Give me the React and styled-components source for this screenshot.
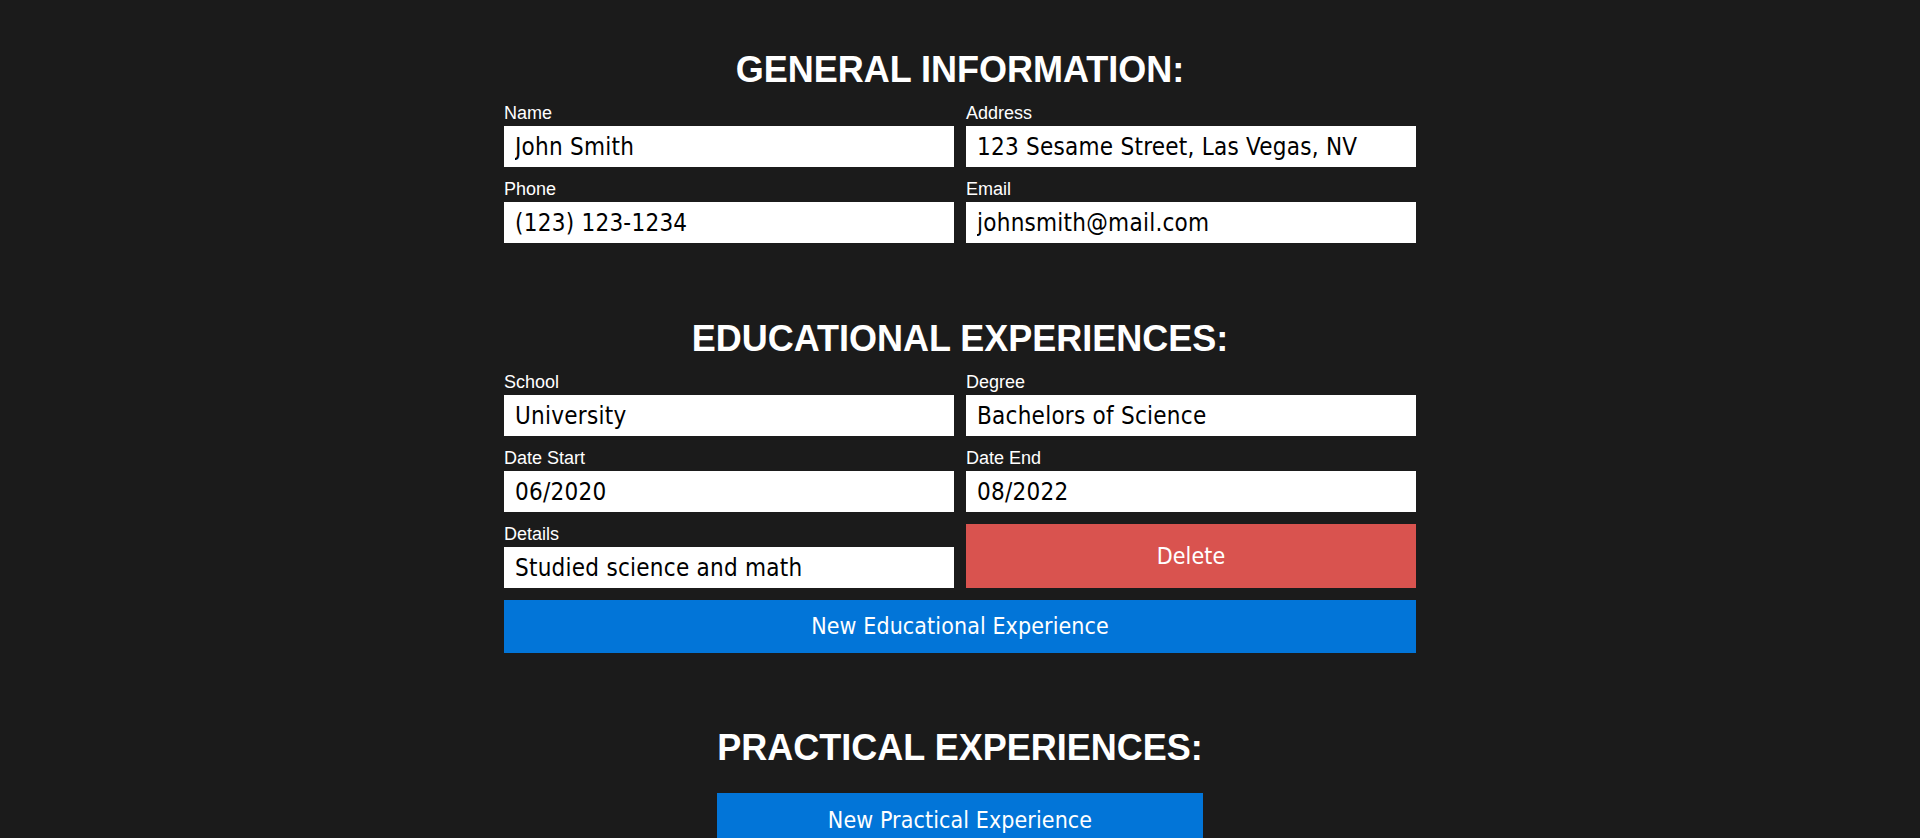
import styled, { createGlobalStyle } from "styled-components";

const GlobalStyle = createGlobalStyle`
  body {
    margin: 0;
    background-color: #1b1b1b;
    font-family: "Liberation Sans", Arial, sans-serif;
    color: #fff;
  }
`;

const Page = styled.main`
  display: flex;
  flex-direction: column;
  align-items: center;
  gap: 74.5px;
  padding-top: 49px;
  padding-bottom: 40px;
`;

const Section = styled.section`
  display: flex;
  flex-direction: column;
  gap: 12px;
`;

const SectionTitle = styled.h2`
  margin: 0;
  font-size: 36px;
  font-weight: 700;
  text-align: center;
  color: #fff;
`;

const FieldGrid = styled.div`
  display: grid;
  grid-template-columns: 450px 450px;
  gap: 12px;
`;

const List = styled.div`
  display: flex;
  flex-direction: column;
  gap: 12px;
`;

const Field = styled.label`
  display: flex;
  flex-direction: column;
  gap: 2px;
`;

const LabelText = styled.span`
  font-size: 18px;
  line-height: 21px;
  color: #fff;
`;

const TextInput = styled.input`
  box-sizing: border-box;
  width: 100%;
  height: 41px;
  margin: 0;
  padding: 1px 10px 0 11px;
  border: none;
  outline: none;
  background: #fff;
  color: #000;
  font-family: "DejaVu Sans Condensed", "DejaVu Sans", sans-serif;
  font-stretch: condensed;
  font-size: 24px;
  letter-spacing: 0.25px;
`;

const Button = styled.button`
  box-sizing: border-box;
  width: 100%;
  height: ${({ tall }) => (tall ? "64px" : "53px")};
  margin: 0;
  padding: 0;
  border: none;
  background-color: ${({ danger }) => (danger ? "#d9534f" : "#0275d8")};
  color: #fff;
  font-family: "DejaVu Sans Condensed", "DejaVu Sans", sans-serif;
  font-stretch: condensed;
  font-size: 23px;
  letter-spacing: 0.1px;
  cursor: pointer;
`;

const general = [
  { label: "Name", value: "John Smith" },
  { label: "Address", value: "123 Sesame Street, Las Vegas, NV" },
  { label: "Phone", value: "(123) 123-1234" },
  { label: "Email", value: "johnsmith@mail.com" },
];

const education = [
  {
    id: 1,
    fields: [
      { label: "School", value: "University" },
      { label: "Degree", value: "Bachelors of Science" },
      { label: "Date Start", value: "06/2020" },
      { label: "Date End", value: "08/2022" },
      { label: "Details", value: "Studied science and math" },
    ],
  },
];

const practical = [];

const InputField = ({ label, value }) => (
  <Field>
    <LabelText>{label}</LabelText>
    <TextInput defaultValue={value} />
  </Field>
);

const App = () => {
  return (
    <>
      <GlobalStyle />
      <Page>
        <Section>
          <SectionTitle>GENERAL INFORMATION:</SectionTitle>
          <FieldGrid>
            {general.map((f) => (
              <InputField key={f.label} {...f} />
            ))}
          </FieldGrid>
        </Section>

        <Section>
          <SectionTitle>EDUCATIONAL EXPERIENCES:</SectionTitle>
          <List>
            {education.map((exp) => (
              <FieldGrid key={exp.id}>
                {exp.fields.map((f) => (
                  <InputField key={f.label} {...f} />
                ))}
                <Button danger tall>
                  Delete
                </Button>
              </FieldGrid>
            ))}
          </List>
          <Button>New Educational Experience</Button>
        </Section>

        <Section>
          <SectionTitle>PRACTICAL EXPERIENCES:</SectionTitle>
          <List>
            {practical.map((exp) => (
              <FieldGrid key={exp.id} />
            ))}
          </List>
          <Button>New Practical Experience</Button>
        </Section>
      </Page>
    </>
  );
};

export default App;
